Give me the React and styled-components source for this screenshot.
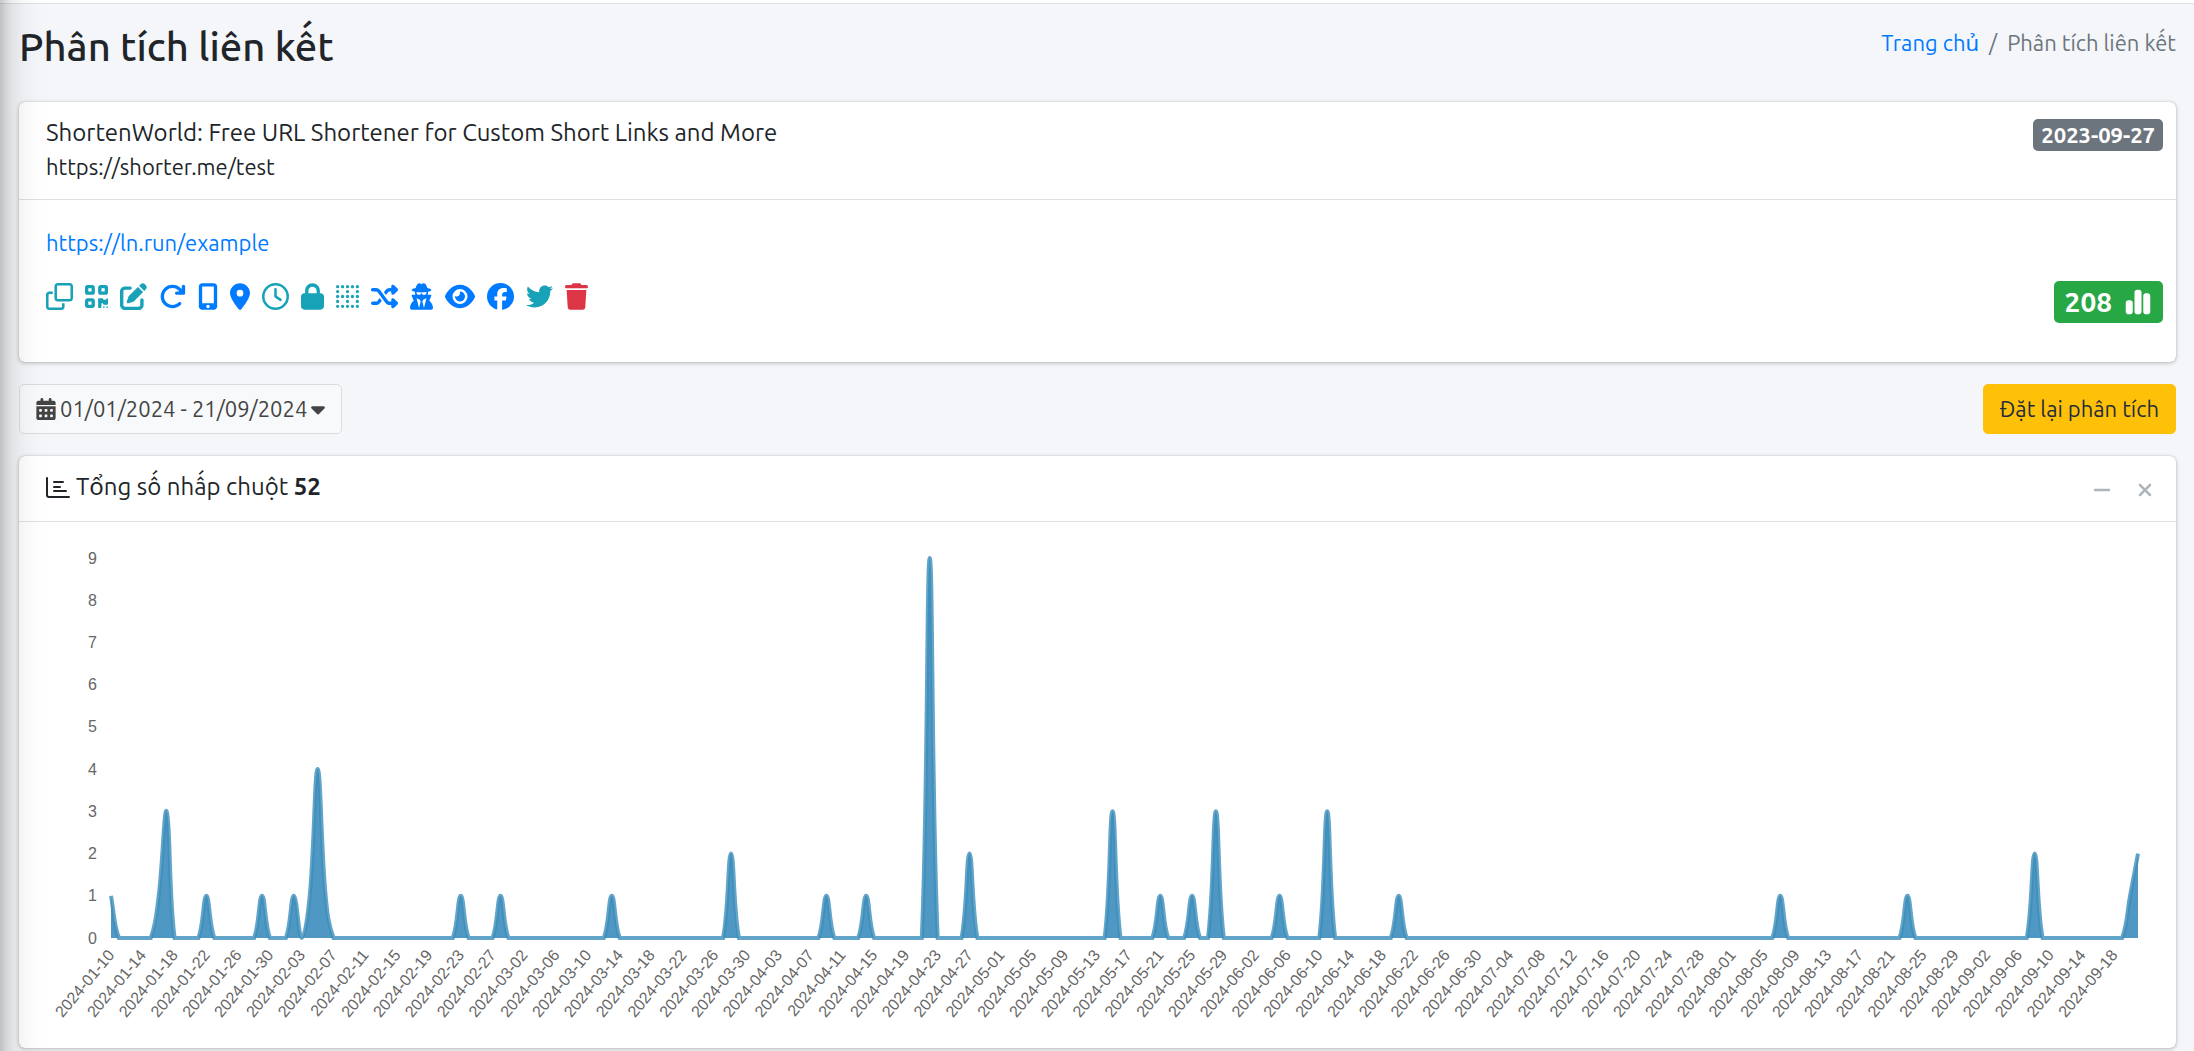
import React, { useLayoutEffect, useRef, useState } from 'react';
import styled, { createGlobalStyle } from 'styled-components';
import {
  FaRegClone,
  FaQrcode,
  FaPenToSquare,
  FaArrowRotateRight,
  FaMobileScreenButton,
  FaLocationDot,
  FaRegClock,
  FaLock,
  FaBorderNone,
  FaShuffle,
  FaUserSecret,
  FaEye,
  FaFacebook,
  FaTwitter,
  FaTrash,
  FaChartSimple,
  FaCalendarDays,
  FaCaretDown,
  FaMinus,
  FaXmark,
} from 'react-icons/fa6';

const GlobalStyle = createGlobalStyle`
  * {
    box-sizing: border-box;
  }

  body {
    margin: 0;
    background: #f4f6f9;
    color: #212529;
    font-family: Ubuntu, "Noto Sans", sans-serif;
    font-size: 22px;
    line-height: 34px;
  }

  a {
    color: #007bff;
    text-decoration: none;
  }

  button {
    font: inherit;
    cursor: pointer;
  }
`;

const Page = styled.div`
  min-height: 100vh;
`;

const Navbar = styled.header`
  height: 4px;
  background: #fff;
  border-bottom: 1px solid #dee2e6;
`;

// collapsed off-canvas menu, only its shadow falls on the page
const Sidebar = styled.aside`
  position: fixed;
  top: -60px;
  bottom: -60px;
  left: -250px;
  width: 250px;
  box-shadow: 0 14px 40px rgba(0, 0, 0, .25), 0 10px 14px rgba(0, 0, 0, .22);
  pointer-events: none;
`;

const Content = styled.main`
  padding: 0 18px 0 19px;
`;

const ContentHeader = styled.div`
  display: flex;
  justify-content: space-between;
  align-items: flex-start;
  padding: 20px 0 32px;
`;

const PageTitle = styled.h1`
  margin: 0;
  font-size: 40px;
  font-weight: 500;
  line-height: 46px;
`;

const Breadcrumb = styled.ol`
  display: flex;
  gap: 10px;
  margin: 0;
  padding: 2px 0 0;
  list-style: none;
  color: #6c757d;

  li + li:before {
    content: '/';
    padding-right: 10px;
  }
`;

const Card = styled.section`
  background: #fff;
  border-radius: 6px;
  box-shadow: 0 0 1px rgba(0, 0, 0, .25), 0 1px 4px rgba(0, 0, 0, .25);
`;

const LinkHeader = styled.div`
  display: flex;
  justify-content: space-between;
  align-items: flex-start;
  padding: 14px 13px 15px 27px;
  border-bottom: 1px solid #dfdfdf;
`;

const LinkTitle = styled.div`
  font-size: 24px;
`;

const Badge = styled.span`
  display: flex;
  align-items: center;
  gap: 12px;
  height: ${props => props.$large ? '42px' : '32px'};
  padding: 0 ${props => props.$large ? '11px' : '8px'};
  margin-top: ${props => props.$large ? '0' : '3px'};
  border-radius: 5px;
  background: ${props => props.$large ? '#28a745' : '#6c757d'};
  color: #fff;
  font-size: ${props => props.$large ? '28px' : '22px'};
  font-weight: 700;
`;

const LinkBody = styled.div`
  display: flex;
  justify-content: space-between;
  align-items: flex-end;
  padding: 26px 13px 39px 27px;
`;

const ActionList = styled.div`
  display: flex;
  gap: 12px;
  padding: 23px 0 13px;
`;

const Action = styled.button`
  display: flex;
  padding: 0;
  border: 0;
  background: none;
  color: ${props => props.$color};

  svg {
    width: ${props => props.$width}px;
    height: 27px;
  }
`;

const Toolbar = styled.div`
  display: flex;
  justify-content: space-between;
  margin: 22px 0;
`;

const ToolbarButton = styled.button`
  display: flex;
  align-items: center;
  gap: 4px;
  height: 50px;
  padding: 0 16px;
  border-radius: 5px;
  border: 1px solid ${props => props.$warning ? '#ffc107' : '#ddd'};
  background: ${props => props.$warning ? '#ffc107' : '#f8f9fa'};
  color: ${props => props.$warning ? '#1f2d3d' : '#444'};
`;

const CalendarIcon = styled(FaCalendarDays)`
  width: 20px;
  height: 22px;
`;

const CaretIcon = styled(FaCaretDown)`
  width: 14px;
  height: 22px;
`;

const ChartHeader = styled.div`
  display: flex;
  justify-content: space-between;
  padding: 14px 10px 11px 27px;
  border-bottom: 1px solid #dfdfdf;
`;

const ChartTitle = styled.h2`
  display: flex;
  gap: 5px;
  margin: 0;
  font-size: 24px;
  font-weight: 400;

  svg {
    margin-top: 7px;
  }
`;

const CardTools = styled.div`
  display: flex;
  height: 40px;
`;

const ToolButton = styled.button`
  display: flex;
  align-items: center;
  justify-content: center;
  width: 43px;
  padding: 0;
  border: 0;
  background: none;
  color: #adb5bd;
  font-size: 20px;
`;

const ChartBody = styled.div`
  padding: 28px;
`;

const ChartSvg = styled.svg`
  display: block;
  width: 100%;
  height: 470px;
  overflow: visible;

  text {
    fill: #666;
    font-family: "Liberation Sans", Arial, sans-serif;
    font-size: 16px;
    text-anchor: end;
    dominant-baseline: central;
  }
`;

const TEAL = '#17a2b8';
const BLUE = '#007bff';
const RED = '#dc3545';

const actions = [
  { label: 'Sao chép', icon: FaRegClone, width: 27, color: TEAL },
  { label: 'Mã QR', icon: FaQrcode, width: 23, color: TEAL },
  { label: 'Chỉnh sửa', icon: FaPenToSquare, width: 27, color: TEAL },
  { label: 'Chuyển hướng', icon: FaArrowRotateRight, width: 27, color: BLUE },
  { label: 'Thiết bị', icon: FaMobileScreenButton, width: 20, color: BLUE },
  { label: 'Vị trí', icon: FaLocationDot, width: 20, color: BLUE },
  { label: 'Hết hạn', icon: FaRegClock, width: 27, color: TEAL },
  { label: 'Mật khẩu', icon: FaLock, width: 23, color: TEAL },
  { label: 'Khung', icon: FaBorderNone, width: 23, color: TEAL },
  { label: 'Xoay vòng', icon: FaShuffle, width: 27, color: BLUE },
  { label: 'Ẩn danh', icon: FaUserSecret, width: 23, color: BLUE },
  { label: 'Xem trước', icon: FaEye, width: 30, color: BLUE },
  { label: 'Facebook', icon: FaFacebook, width: 27, color: BLUE },
  { label: 'Twitter', icon: FaTwitter, width: 27, color: TEAL },
  { label: 'Xóa', icon: FaTrash, width: 23, color: RED },
];

// clicks by day number, counted from the first day; all other days are 0
const FIRST_DAY = Date.UTC(2024, 0, 10);
const DAYS = 256;
const clicks = {
  0: 1, 6: 1, 7: 3, 12: 1, 19: 1, 23: 1, 25: 1, 26: 4, 27: 1, 44: 1, 49: 1,
  63: 1, 78: 2, 90: 1, 95: 1, 103: 9, 108: 2, 126: 3, 132: 1, 136: 1, 139: 3,
  147: 1, 153: 3, 162: 1, 210: 1, 226: 1, 242: 2, 254: 1, 255: 2,
};
const values = Array.from({ length: DAYS }, (_, i) => clicks[i] || 0);
const total = values.reduce((sum, v) => sum + v, 0);

const dayLabel = (i) => new Date(FIRST_DAY + i * 86400000).toISOString().slice(0, 10);

const TOP = 8;
const BOTTOM = 388;
const LEFT = 64;
const RIGHT = 10;
const MAX = 9;
const TENSION = 0.4;

// bezier through all points, control points kept inside the plot area
function curve(points) {
  const cap = (y) => Math.max(TOP, Math.min(BOTTOM, y));
  const controls = points.map((p, i) => {
    const prev = points[i - 1] || p;
    const next = points[i + 1] || p;
    const d0 = Math.hypot(p.x - prev.x, p.y - prev.y);
    const d1 = Math.hypot(next.x - p.x, next.y - p.y);
    const a = TENSION * d0 / (d0 + d1);
    const b = TENSION * d1 / (d0 + d1);
    return {
      inX: p.x - a * (next.x - prev.x),
      inY: cap(p.y - a * (next.y - prev.y)),
      outX: p.x + b * (next.x - prev.x),
      outY: cap(p.y + b * (next.y - prev.y)),
    };
  });
  return points.map((p, i) => {
    if (i === 0) return `M${p.x} ${p.y}`;
    const from = controls[i - 1];
    const to = controls[i];
    return `C${from.outX} ${from.outY} ${to.inX} ${to.inY} ${p.x} ${p.y}`;
  }).join('');
}

function ClicksChart() {
  const ref = useRef();
  const [width, setWidth] = useState(2101);

  useLayoutEffect(() => {
    const measure = () => setWidth(ref.current.getBoundingClientRect().width);
    measure();
    window.addEventListener('resize', measure);
    return () => window.removeEventListener('resize', measure);
  }, []);

  const xOf = (i) => LEFT + i * (width - LEFT - RIGHT) / (DAYS - 1);
  const yOf = (v) => BOTTOM - v * (BOTTOM - TOP) / MAX;
  const line = curve(values.map((v, i) => ({ x: xOf(i), y: yOf(v) })));
  const area = `${line}L${xOf(DAYS - 1)} ${BOTTOM}L${xOf(0)} ${BOTTOM}Z`;

  return (
    <ChartSvg ref={ref} role="img" aria-label="Tổng số nhấp chuột">
      {Array.from({ length: MAX + 1 }, (_, v) => (
        <text key={v} x={LEFT - 14} y={yOf(v)}>{v}</text>
      ))}
      {values.map((_, i) => i % 4 === 0 && i < DAYS - 3 && (
        <text key={i} transform={`translate(${xOf(i)} ${BOTTOM + 14}) rotate(-50)`}>
          {dayLabel(i)}
        </text>
      ))}
      <path d={area} fill="rgba(60,141,188,.9)" />
      <path d={line} fill="none" stroke="rgba(60,141,188,.8)" strokeWidth="4" />
    </ChartSvg>
  );
}

function BarsIcon() {
  return (
    <svg width="25" height="22" viewBox="0 0 25 22" fill="none" stroke="currentColor" strokeWidth="2" strokeLinecap="round" aria-hidden="true">
      <path d="M1 1V18Q1 20 3 20H23" />
      <path d="M8 5H17M8 10H14M8 14H20" />
    </svg>
  );
}

export default function App() {
  return (
    <Page>
      <GlobalStyle />
      <Navbar />
      <Content>
        <ContentHeader>
          <PageTitle>Phân tích liên kết</PageTitle>
          <Breadcrumb>
            <li><a href="#home">Trang chủ</a></li>
            <li>Phân tích liên kết</li>
          </Breadcrumb>
        </ContentHeader>

        <Card>
          <LinkHeader>
            <div>
              <LinkTitle>ShortenWorld: Free URL Shortener for Custom Short Links and More</LinkTitle>
              <div>https://shorter.me/test</div>
            </div>
            <Badge>2023-09-27</Badge>
          </LinkHeader>
          <LinkBody>
            <div>
              <a href="#example">https://ln.run/example</a>
              <ActionList>
                {actions.map(({ label, icon: Icon, width, color }) => (
                  <Action key={label} type="button" aria-label={label} $width={width} $color={color}>
                    <Icon />
                  </Action>
                ))}
              </ActionList>
            </div>
            <Badge $large>208 <FaChartSimple /></Badge>
          </LinkBody>
        </Card>

        <Toolbar>
          <ToolbarButton type="button">
            <CalendarIcon />
            01/01/2024 - 21/09/2024
            <CaretIcon />
          </ToolbarButton>
          <ToolbarButton type="button" $warning>Đặt lại phân tích</ToolbarButton>
        </Toolbar>

        <Card>
          <ChartHeader>
            <ChartTitle>
              <BarsIcon />
              <span>Tổng số nhấp chuột <b>{total}</b></span>
            </ChartTitle>
            <CardTools>
              <ToolButton type="button" aria-label="Thu gọn"><FaMinus /></ToolButton>
              <ToolButton type="button" aria-label="Đóng"><FaXmark /></ToolButton>
            </CardTools>
          </ChartHeader>
          <ChartBody>
            <ClicksChart />
          </ChartBody>
        </Card>
      </Content>
      <Sidebar />
    </Page>
  );
}
